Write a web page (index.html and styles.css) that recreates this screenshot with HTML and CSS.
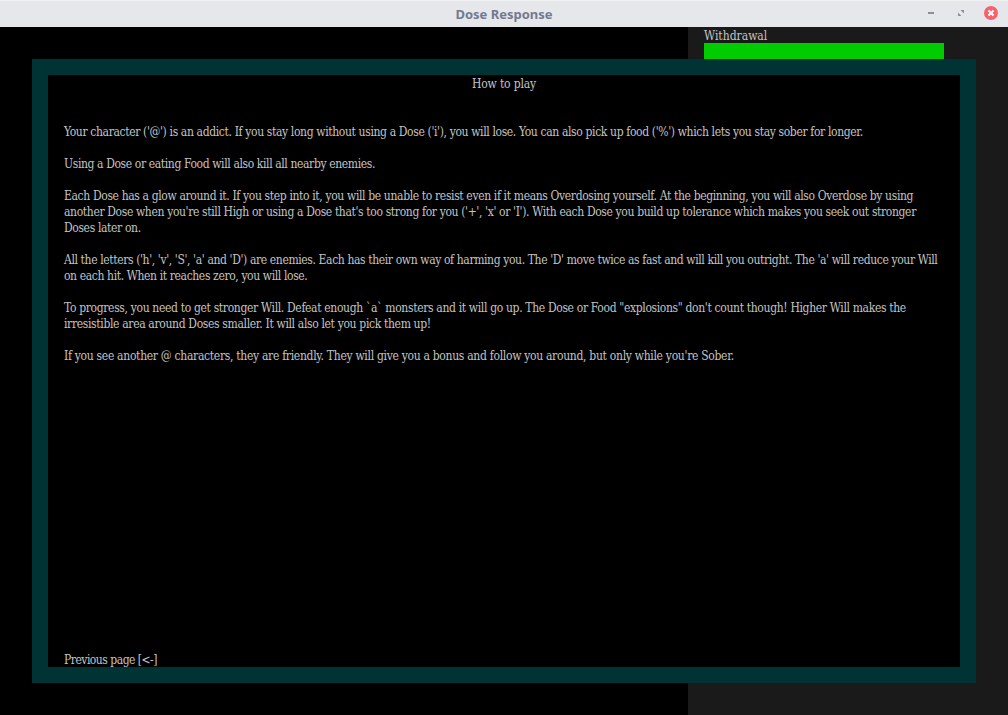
FILE: index.html
```html
<!DOCTYPE html>
<html lang="en">
<head>
<meta charset="utf-8">
<title>Dose Response</title>
<link rel="stylesheet" href="styles.css">
</head>
<body>
<div class="window">
  <header class="titlebar">
    <span class="title">Dose Response</span>
    <div class="controls">
      <svg class="ctl" width="12" height="12" viewBox="0 0 12 12"><rect x="4" y="5" width="6" height="2" fill="#8b8e98"/></svg>
      <svg class="ctl" width="12" height="12" viewBox="0 0 12 12"><path d="M6.500 3H10v3.500zM4 5.500L7.500 9H4z" fill="#8b8e98"/></svg>
      <svg class="close" width="14" height="14" viewBox="0 0 14 14"><circle cx="7" cy="7" r="7" fill="#f4626d"/><path d="M4.500 4.500l5 5M9.500 4.500l-5 5" stroke="#fff" stroke-width="2"/></svg>
    </div>
  </header>
  <div class="game">
    <main class="map"></main>
    <aside class="side">
      <div class="label">Withdrawal</div>
      <div class="bar"></div>
    </aside>
  </div>
  <section class="modal">
    <h1 class="heading">How to play</h1>
    <div class="content">
      <p class="fit-a">Your character ('@') is an addict. If you stay long without using a Dose ('i'), you will lose. You can also pick up food ('%') which lets you stay sober for longer.</p>
      <p class="fit-b">Using a Dose or eating Food will also kill all nearby enemies.</p>
      <p class="fit-a">Each Dose has a glow around it. If you step into it, you will be unable to resist even if it means Overdosing yourself. At the beginning, you will also Overdose by using<br>another Dose when you're still High or using a Dose that's too strong for you ('+', 'x' or 'I'). With each Dose you build up tolerance which makes you seek out stronger<br>Doses later on.</p>
      <p class="fit-b">All the letters ('h', 'v', 'S', 'a' and 'D') are enemies. Each has their own way of harming you. The 'D' move twice as fast and will kill you outright. The 'a' will reduce your Will<br>on each hit. When it reaches zero, you will lose.</p>
      <p class="fit-c">To progress, you need to get stronger Will. Defeat enough `a` monsters and it will go up. The Dose or Food "explosions" don't count though! Higher Will makes the<br>irresistible area around Doses smaller. It will also let you pick them up!</p>
      <p class="fit-d">If you see another @ characters, they are friendly. They will give you a bonus and follow you around, but only while you're Sober.</p>
    </div>
    <div class="footer">Previous page [&lt;-]</div>
  </section>
</div>
</body>
</html>
```
FILE: styles.css
```css
* { box-sizing: border-box; }
html, body { margin: 0; height: 100%; overflow: hidden; background: #000; }
.window {
  position: relative;
  width: 1008px;
  height: 715px;
  display: flex;
  flex-direction: column;
  font-family: "DejaVu Serif Condensed", "Liberation Serif", serif;
  font-size: 12px;
  line-height: 16px;
  color: #c4c4c4;
}
.titlebar {
  height: 27px;
  flex: none;
  display: flex;
  align-items: center;
  justify-content: center;
  position: relative;
  background: #e6e7eb;
  border-top: 1px solid #f0f1f3;
}
.title {
  font: 700 13px/1 "Noto Sans", sans-serif;
  color: #727a90;
}
.controls {
  position: absolute;
  right: 10px;
  top: 5px;
  display: flex;
  align-items: center;
  gap: 18px;
}
.game { flex: 1; display: flex; }
.map { width: 688px; background: #000; }
.side { flex: 1; background: #1a1a1a; padding: 0 64px 0 16px; }
.label { height: 16px; padding-top: 1px; }
.bar { height: 16px; background: #00cd00; }
.modal {
  position: absolute;
  left: 32px;
  top: 59px;
  width: 944px;
  height: 624px;
  border: 16px solid #003333;
  background: #000;
  padding: 1px 16px 0;
  display: flex;
  flex-direction: column;
}
.heading {
  margin: 0;
  font: inherit;
  letter-spacing: -0.15px;
  text-align: center;
  height: 48px;
  flex: none;
}
.content { flex: 1; }
.content p { margin: 0 0 16px; white-space: nowrap; }
.fit-a { letter-spacing: -0.36px; }
.fit-b { letter-spacing: -0.38px; }
.fit-c { letter-spacing: -0.34px; }
.fit-d { letter-spacing: -0.3px; }
.footer { height: 15px; flex: none; letter-spacing: -0.5px; }
```
